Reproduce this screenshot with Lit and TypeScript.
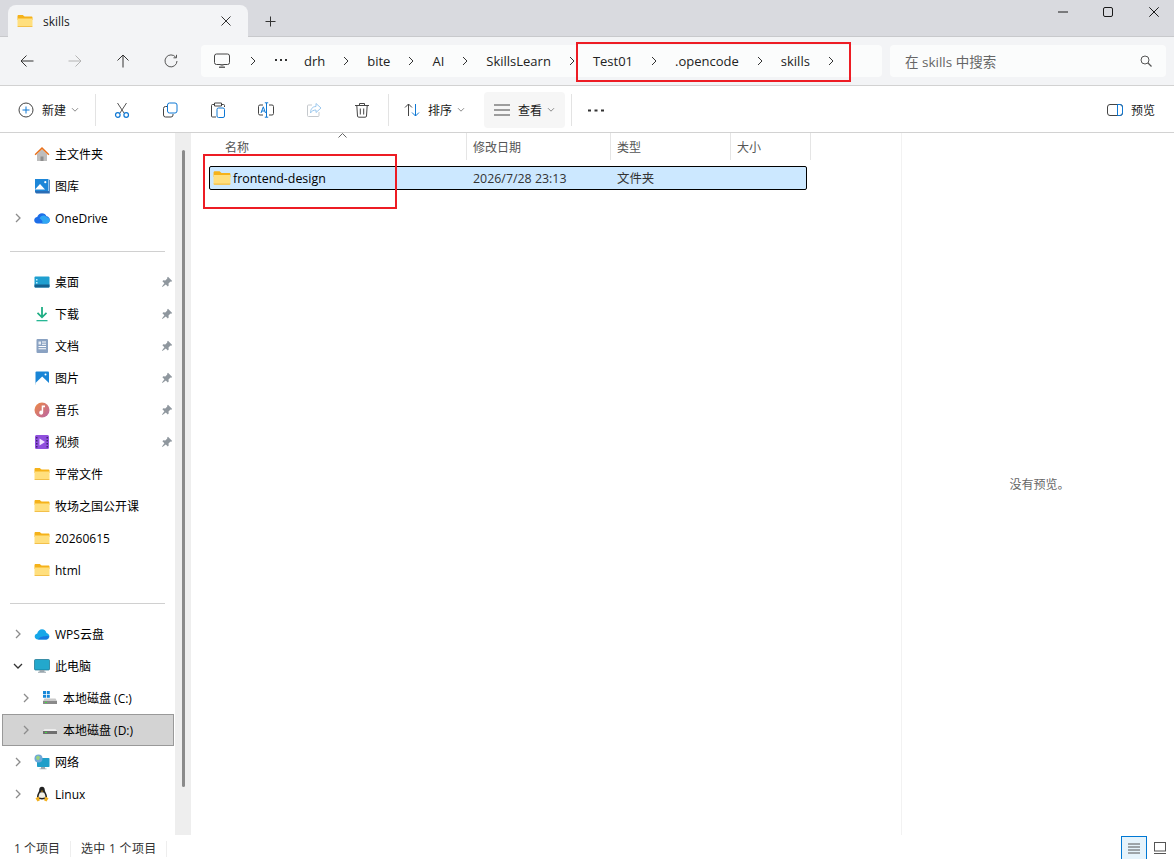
import { LitElement, css, html, svg } from "lit";
import { customElement } from "lit/decorators.js";

const folderIcon = (size = 16) => html`<svg width=${size} height=${size} viewBox="0 0 16 16">
  <path d="M0.5 3.2c0-.7.5-1.2 1.2-1.2h3.6c.4 0 .7.1 1 .4L7.6 3.5h6.8c.7 0 1.1.5 1.1 1.1V7H.5z" fill="#f5b21a" />
  <path d="M.5 5.4h15v7.5c0 .7-.5 1.2-1.2 1.2H1.7c-.7 0-1.2-.5-1.2-1.2z" fill="#ffdf7e" />
  <path d="M.5 12.9v.1c0 .6.5 1.1 1.2 1.1h12.6c.7 0 1.2-.5 1.2-1.1v-.1z" fill="#f3c04a" />
</svg>`;

const pinIcon = html`<svg width="12" height="12" viewBox="0 0 12 12">
  <path d="M7 .8l4.2 4.2-1 .8-.7-.2-2 2 .2 2-.9.9-2-2L1.4 11 1 10.6l2.4-3.4-2-2 .9-.9 2 .2 2-2-.2-.7z" fill="#8f979e" />
</svg>`;

const navIcons: Record<string, unknown> = {
  home: svg`<path d="M3 8v7h10V8L8 3.5z" fill="#bdbdbd" /><path d="M6.5 15v-4.5h3V15z" fill="#8e8e8e" /><path d="M.6 8.2L8 1l7.4 7.2-1 1.1L8 3.3 1.6 9.3z" fill="#e8701a" />`,
  gallery: svg`<path d="M1 1h13.5v12.8H1z" fill="#1c86d8" /><path d="M1 11.5l5-5.5 5 5.5z" fill="#fff" /><circle cx="11.3" cy="4.2" r="1.1" fill="#fff" /><path d="M1 13h14V1.8h.8V15.4H2.5c-1 0-1.5-1-1.5-2.4z" fill="#2a6db5" />`,
  cloud: svg`<path d="M3.7 13.5C1.6 13.5.2 12 .2 10.2c0-1.8 1.3-3.1 3-3.3C4 4.600 5.800 3.200 8 3.200c2.100 0 3.800 1.200 4.500 3.100 1.900.100 3.300 1.700 3.300 3.600 0 2-1.500 3.600-3.500 3.600z" fill="#1d6ee8" /><path d="M5.500 8.500c1-2.600 3.500-3.800 5.800-2.600 1 .5 1.500 1 1.700 1.400 1.700.4 2.800 1.600 2.800 2.800 0 2-1.500 3.400-3.500 3.400H7.500c2 -1 1-3.500-2-5z" fill="#2fa6f2" />`,
  desktop: svg`<rect x="0.500" y="2.500" width="15" height="11" rx="1" fill="#1f9fd0" /><path d="M.5 10.500h15v2c0 .6-.4 1-1 1h-13c-.6 0-1-.4-1-1z" fill="#14608f" /><path d="M2 5h1.500v1.500H2zM2 8h1.500v1.500H2z" fill="#bff0ff" />`,
  download: svg`<path d="M7.100 1h1.800v8.300l3-3 1.200 1.200L8 12.600 2.900 7.500l1.200-1.200 3 3z" fill="#1fae84" /><path d="M2.500 14h11v1.300h-11z" fill="#27b795" />`,
  doc: svg`<rect x="2.500" y="1" width="11.500" height="14" rx="1" fill="#8aa2c2" /><path d="M8 3.500h4v1H8zM8 5.800h4v1H8zM4.500 8h7.500v1H4.500zM4.500 10.300h7.500v1H4.500z" fill="#fff" /><path d="M4.500 3.500h2.500v3H4.500z" fill="#e7edf5" />`,
  picture: svg`<rect x="1.500" y="1.500" width="13.500" height="13.500" rx="1" fill="#1a85d6" /><path d="M1.500 13L8.200 6.500 15 13v2H1.500z" fill="#fff" /><circle cx="11.500" cy="4.500" r="1" fill="#fff" />`,
  music: svg`<defs><linearGradient id="mg" x1="0" y1="0" x2="1" y2="1"><stop offset="0" stop-color="#ef8a42" /><stop offset="1" stop-color="#b964a8" /></linearGradient></defs><circle cx="8" cy="8" r="7.500" fill="url(#mg)" /><path d="M7.700 3.500h3.300v1.800H9.200v5.300a2 2 0 1 1-1.500-1.900z" fill="#fff" />`,
  video: svg`<rect x="1" y="1" width="14" height="14" rx="1.500" fill="#8f4fdd" /><path d="M2 3h1.500v1.500H2zM2 6h1.500v1.500H2zM2 9h1.500v1.500H2zM2 12h1.500v1.500H2zM12.500 3H14v1.500h-1.500zM12.500 6H14v1.500h-1.500zM12.500 9H14v1.500h-1.500zM12.500 12H14v1.500h-1.500z" fill="#3f2470" /><path d="M5.500 4.500L11 8l-5.500 3.500z" fill="#f1e6ff" />`,
  wps: svg`<path d="M4 13.500c-2 0-3.300-1.400-3.300-3 0-1.500 1-2.700 2.500-3C3.900 5 5.800 3.300 8 3.300c2.200 0 4 1.500 4.500 3.700 1.700.3 2.900 1.700 2.900 3.300 0 1.800-1.400 3.200-3.200 3.200z" fill="#16a7e8" /><path d="M4 13.500c2-3 5-3.500 11-3.500 0 2-1.300 3.500-3 3.500z" fill="#1679e0" />`,
  pc: svg`<rect x=".5" y="1.500" width="15" height="10.500" rx="1" fill="#23a8cc" stroke="#16708d" stroke-width=".7" /><path d="M5.500 12h5v1.800h-5zM4 13.800h8v1H4z" fill="#9aa7ae" />`,
  diskC: svg`<path d="M1 1h3v3H1zM4.800 1h3v3h-3zM1 4.800h3v3H1zM4.800 4.800h3v3h-3z" fill="#1788d8" /><path d="M1 11l1.500-2.500h11L15 11z" fill="#c9c9c9" /><rect x="1" y="11" width="14" height="3" fill="#8a8a8a" /><rect x="3" y="12" width="2" height="1" fill="#40e040" />`,
  diskD: svg`<path d="M1 9l1.500-2h11L15 9z" fill="#ececec" /><rect x="1" y="9" width="14" height="3" fill="#6f6f6f" /><rect x="3" y="10" width="2" height="1" fill="#40e040" />`,
  network: svg`<rect x="3" y="4" width="12.500" height="9" rx=".8" fill="#1f9ec9" /><path d="M7 13h4v1.500H7zM5.500 14.500h7v.8h-7z" fill="#9aa7ae" /><circle cx="4.500" cy="4.500" r="4" fill="#6fa8d8" /><path d="M2 3l2-1.500L6 3 5 6 2.500 5.500z" fill="#9ad27c" />`,
  linux: svg`<path d="M8 .8c-2 0-2.800 1.600-2.800 3.400 0 1.500-2.200 3.600-2.200 6.300 0 1.500 1 2.900 5 2.900s5-1.400 5-2.900c0-2.700-2.200-4.800-2.200-6.300C10.800 2.400 10 .8 8 .8z" fill="#222" /><path d="M6 6.800c.7-.7 3.300-.7 4 0 1 1.400 1.500 2.900 1.300 4.300-1 1.200-5.600 1.200-6.600 0-.2-1.400.3-2.900 1.300-4.300z" fill="#f4f0e4" /><path d="M6.800 4.800h2.400L8 6z" fill="#f2b01e" /><path d="M1.500 12.200L4.600 10.500l1.400 3.700-2.500 1.300zM14.500 12.200l-3.100-1.700-1.400 3.700 2.500 1.300z" fill="#f2b01e" />`,
};

type NavRow = {
  label: string;
  icon: string;
  arrow?: "right" | "down";
  pinned?: boolean;
  child?: boolean;
  selected?: boolean;
  folder?: boolean;
};

const quick: NavRow[] = [
  { label: "主文件夹", icon: "home" },
  { label: "图库", icon: "gallery" },
  { label: "OneDrive", icon: "cloud", arrow: "right" },
];
const pinnedRows: NavRow[] = [
  { label: "桌面", icon: "desktop", pinned: true },
  { label: "下载", icon: "download", pinned: true },
  { label: "文档", icon: "doc", pinned: true },
  { label: "图片", icon: "picture", pinned: true },
  { label: "音乐", icon: "music", pinned: true },
  { label: "视频", icon: "video", pinned: true },
  { label: "平常文件", icon: "", folder: true },
  { label: "牧场之国公开课", icon: "", folder: true },
  { label: "20260615", icon: "", folder: true },
  { label: "html", icon: "", folder: true },
];
const drives: NavRow[] = [
  { label: "WPS云盘", icon: "wps", arrow: "right" },
  { label: "此电脑", icon: "pc", arrow: "down" },
  { label: "本地磁盘 (C:)", icon: "diskC", arrow: "right", child: true },
  { label: "本地磁盘 (D:)", icon: "diskD", arrow: "right", child: true, selected: true },
  { label: "网络", icon: "network", arrow: "right" },
  { label: "Linux", icon: "linux", arrow: "right" },
];

const crumbs = ["drh", "bite", "AI", "SkillsLearn", "Test01", ".opencode", "skills"];

const chevron = html`<svg class="crumb-chev" width="8" height="10" viewBox="0 0 8 10"><path d="M2 1l4 4-4 4" fill="none" stroke="#333" stroke-width="1" /></svg>`;
const miniChevron = html`<svg class="mini" width="8" height="6" viewBox="0 0 8 6"><path d="M1 1.200l3 3 3-3" fill="none" stroke="#8a8a8a" stroke-width="1" /></svg>`;

@customElement("app-root")
export class AppRoot extends LitElement {
  private navRow(r: NavRow) {
    return html`<div class="nav-row ${r.child ? "child" : ""} ${r.selected ? "selected" : ""}">
      <span class="arrow">
        ${r.arrow === "right"
          ? html`<svg width="8" height="10" viewBox="0 0 8 10"><path d="M2 1l4 4-4 4" fill="none" stroke="#8c8c8c" stroke-width="1.300" /></svg>`
          : r.arrow === "down"
            ? html`<svg width="10" height="8" viewBox="0 0 10 8"><path d="M1 2l4 4 4-4" fill="none" stroke="#333" stroke-width="1.300" /></svg>`
            : ""}
      </span>
      <span class="nav-icon">
        ${r.folder ? folderIcon() : html`<svg width="16" height="16" viewBox="0 0 16 16">${navIcons[r.icon]}</svg>`}
      </span>
      <span class="nav-label">${r.label}</span>
      ${r.pinned ? html`<span class="pin">${pinIcon}</span>` : ""}
    </div>`;
  }

  render() {
    return html`
      <div class="titlebar">
        <div class="tab">
          ${folderIcon()}
          <span class="tab-title">skills</span>
          <svg class="tab-close" width="10" height="10" viewBox="0 0 10 10"><path d="M.5.5l9 9M9.500.5l-9 9" stroke="#333" stroke-width="1" /></svg>
        </div>
        <svg class="tab-add" width="11" height="11" viewBox="0 0 11 11"><path d="M5.500.5v10M.5 5.500h10" stroke="#333" stroke-width="1" /></svg>
        <div class="win-controls">
          <svg width="10" height="10" viewBox="0 0 10 10"><path d="M0 5h10" stroke="#1a1a1a" stroke-width="1" /></svg>
          <svg width="10" height="10" viewBox="0 0 10 10"><rect x=".5" y=".5" width="9" height="9" rx="1.500" fill="none" stroke="#1a1a1a" stroke-width="1" /></svg>
          <svg width="10" height="10" viewBox="0 0 10 10"><path d="M.3.3l9.400 9.400M9.700.3L.3 9.700" stroke="#1a1a1a" stroke-width="1" /></svg>
        </div>
      </div>

      <div class="addressrow">
        <div class="nav-buttons">
          <svg width="14" height="14" viewBox="0 0 14 14"><path d="M13.500 7H1M6.500 1.500L1 7l5.500 5.500" fill="none" stroke="#333" stroke-width="1" /></svg>
          <svg width="14" height="14" viewBox="0 0 14 14"><path d="M.5 7H13M7.500 1.500L13 7l-5.500 5.500" fill="none" stroke="#b4b4b4" stroke-width="1" /></svg>
          <svg width="14" height="14" viewBox="0 0 14 14"><path d="M7 13.500V1M1.500 6.500L7 1l5.500 5.500" fill="none" stroke="#333" stroke-width="1" /></svg>
          <svg width="14" height="14" viewBox="0 0 14 14"><path d="M11.800 3.300A6 6 0 1 0 13 7M12.500.8v3h-3" fill="none" stroke="#555" stroke-width="1" /></svg>
        </div>
        <div class="crumbs">
          <svg class="monitor" width="16" height="16" viewBox="0 0 16 16"><rect x=".5" y="1" width="15" height="10.500" rx="2" fill="none" stroke="#444" stroke-width="1" /><path d="M5 13.500h6v1.500H5z" fill="#666" /><path d="M6.500 11.500h3v2h-3z" fill="#999" /></svg>
          ${chevron}
          <svg class="crumb-dots" width="12" height="3" viewBox="0 0 12 3"><path d="M0 0h2v2H0zM5 0h2v2H5zM10 0h2v2h-2z" fill="#333" /></svg>
          ${crumbs.map((c) => html`<span class="crumb">${c}</span>${chevron}`)}
        </div>
        <div class="search">
          <span>在 skills 中搜索</span>
          <svg width="12" height="12" viewBox="0 0 12 12"><circle cx="5" cy="5" r="4" fill="none" stroke="#555" stroke-width="1" /><path d="M8 8l3.500 3.500" stroke="#555" stroke-width="1.200" /></svg>
        </div>
      </div>

      <div class="toolbar">
        <div class="tool-new">
          <svg width="16" height="16" viewBox="0 0 16 16"><circle cx="8" cy="8" r="7" fill="none" stroke="#444" stroke-width="1" /><path d="M8 4.500v7M4.500 8h7" stroke="#0f78d4" stroke-width="1" /></svg>
          <span>新建</span>
          ${miniChevron}
        </div>
        <i class="tool-sep"></i>
        <div class="tool-icons">
          <svg width="16" height="16" viewBox="0 0 16 16"><path d="M3.500 1L10 11M12.500 1L6 11" fill="none" stroke="#555" stroke-width="1" /><circle cx="3.800" cy="13" r="2.300" fill="none" stroke="#0f78d4" stroke-width="1.200" /><circle cx="12.200" cy="13" r="2.300" fill="none" stroke="#0f78d4" stroke-width="1.200" /></svg>
          <svg width="16" height="16" viewBox="0 0 16 16"><rect x="5.500" y="1" width="9.500" height="10" rx="2" fill="none" stroke="#0f78d4" stroke-width="1" /><path d="M5 4.500H3.500a2 2 0 0 0-2 2V13a2 2 0 0 0 2 2H9a2 2 0 0 0 2-2v-1" fill="none" stroke="#444" stroke-width="1" /></svg>
          <svg width="16" height="16" viewBox="0 0 16 16"><path d="M4 2.500H2.500a1 1 0 0 0-1 1V14a1 1 0 0 0 1 1H6M12 2.500h1.500a1 1 0 0 1 1 1V5M4.500 1h7v3h-7z" fill="none" stroke="#444" stroke-width="1" /><rect x="7" y="6" width="7.500" height="9.500" rx="1.500" fill="none" stroke="#0f78d4" stroke-width="1" /></svg>
          <svg width="16" height="16" viewBox="0 0 16 16"><path d="M5 3H2a1.500 1.500 0 0 0-1.500 1.500v7A1.500 1.500 0 0 0 2 13h3M11 3h3a1.500 1.500 0 0 1 1.500 1.500v7A1.500 1.500 0 0 1 14 13h-3" fill="none" stroke="#444" stroke-width="1" /><path d="M8.500 1v14M6.800.8h3.400M6.800 15.200h3.400M3 11l2.300-6.200L7.500 11M3.800 9h3" fill="none" stroke="#0f78d4" stroke-width="1" /></svg>
          <svg width="16" height="16" viewBox="0 0 16 16"><path d="M6 3H2.500a1 1 0 0 0-1 1v9.500a1 1 0 0 0 1 1H12a1 1 0 0 0 1-1V10" fill="none" stroke="#c5c9cd" stroke-width="1" /><path d="M10 1.500L15 6l-5 4.500V8C7.500 8 5.500 9 4.500 11c0-4 2-6.500 5.500-6.500z" fill="none" stroke="#9cc8ee" stroke-width="1" /></svg>
          <svg width="16" height="16" viewBox="0 0 16 16"><path d="M1 3.500h14M5.500 3.500V1.500h5v2M2.800 3.500l.7 10.500a1.300 1.300 0 0 0 1.300 1.200h6.400a1.300 1.300 0 0 0 1.300-1.200l.7-10.500M6.300 6.500v6M9.700 6.500v6" fill="none" stroke="#444" stroke-width="1" /></svg>
        </div>
        <i class="tool-sep second"></i>
        <div class="tool-sort">
          <svg width="16" height="16" viewBox="0 0 16 16"><path d="M4.500 14V2M1 5.500L4.500 2 8 5.500" fill="none" stroke="#444" stroke-width="1" /><path d="M11.500 2v12M8 10.500l3.500 3.500 3.500-3.500" fill="none" stroke="#0f78d4" stroke-width="1" /></svg>
          <span>排序</span>
          ${miniChevron}
        </div>
        <div class="tool-view">
          <svg width="16" height="16" viewBox="0 0 16 16"><path d="M0 3h16M0 8h16M0 13h16" stroke="#444" stroke-width="1" /></svg>
          <span>查看</span>
          ${miniChevron}
        </div>
        <i class="tool-sep third"></i>
        <svg class="tool-more" width="16" height="3" viewBox="0 0 16 3"><path d="M0 .5h3v2H0zM6.500 .5h3v2h-3zM13 .5h3v2h-3z" fill="#333" /></svg>
        <div class="tool-preview">
          <svg width="16" height="14" viewBox="0 0 16 14"><rect x=".5" y="1.500" width="15" height="11" rx="2.500" fill="none" stroke="#444" stroke-width="1" /><path d="M10.500 1.500v11M10.500 1.500H13a2.500 2.500 0 0 1 2.500 2.500v6a2.500 2.500 0 0 1-2.500 2.500h-2.500" fill="none" stroke="#0f78d4" stroke-width="1" /></svg>
          <span>预览</span>
        </div>
      </div>

      <div class="body">
        <nav class="sidebar">
          <div class="nav-group">${quick.map((r) => this.navRow(r))}</div>
          <hr />
          <div class="nav-group">${pinnedRows.map((r) => this.navRow(r))}</div>
          <hr />
          <div class="nav-group">${drives.map((r) => this.navRow(r))}</div>
        </nav>
        <div class="track"><div class="thumb"></div></div>

        <section class="files">
          <div class="columns">
            <svg class="sort-caret" width="9" height="5" viewBox="0 0 9 5"><path d="M.5 4.500l4-4 4 4" fill="none" stroke="#666" stroke-width="1" /></svg>
            <span>名称</span><span>修改日期</span><span>类型</span><span>大小</span>
          </div>
          <div class="file-row">
            <span class="file-name">${folderIcon(18)}<b>frontend-design</b></span>
            <span>2026/7/28 23:13</span>
            <span>文件夹</span>
          </div>
        </section>

        <aside class="preview"><span>没有预览。</span></aside>
      </div>

      <footer class="status">
        <span class="count">1 个项目</span>
        <span class="count selected-count">选中 1 个项目</span>
        <div class="view-toggle">
          <span class="toggle active">
            <svg width="12" height="11" viewBox="0 0 12 11"><path d="M0 1h12M0 4h12M0 7h12M0 10h12" stroke="#555" stroke-width="1" /></svg>
          </span>
          <span class="toggle">
            <svg width="12" height="12" viewBox="0 0 12 12"><rect x=".5" y=".5" width="11" height="8.500" fill="none" stroke="#555" stroke-width="1" /><path d="M0 11.500h12" stroke="#555" stroke-width="1" /></svg>
          </span>
        </div>
      </footer>

      <div class="callout path-callout"></div>
      <div class="callout row-callout"></div>
    `;
  }

  static styles = css`
    :host {
      display: flex;
      flex-direction: column;
      position: relative;
      width: 100%;
      height: 100vh;
      overflow: hidden;
      background: #fff;
      color: #1a1a1a;
      font-family: "Open Sans", "Noto Sans CJK SC", sans-serif;
      font-size: 12px;
    }

    svg {
      flex: none;
      display: block;
    }

    .titlebar {
      flex: none;
      height: 37px;
      box-sizing: border-box;
      display: flex;
      align-items: flex-end;
      background: #d9dadf;
      border-bottom: 1px solid #c8c9cc;
      padding-left: 8px;
    }
    .tab {
      width: 240px;
      height: 32px;
      box-sizing: border-box;
      margin-bottom: -1px;
      padding: 0 17px 0 9px;
      display: flex;
      align-items: center;
      background: #f3f4f6;
      border-radius: 8px 8px 0 0;
    }
    .tab-title {
      margin-left: 10px;
      flex: 1;
    }
    .tab-add {
      margin: 0 0 9px 17px;
    }
    .win-controls {
      margin-left: auto;
      align-self: flex-start;
      padding: 7px 15px 0 0;
      display: flex;
      gap: 35px;
    }
    .win-controls svg:last-child {
      margin-left: 1px;
    }

    .addressrow {
      flex: none;
      height: 49px;
      box-sizing: border-box;
      display: flex;
      align-items: center;
      background: #f3f4f6;
      border-bottom: 1px solid #d2d2d2;
      padding-bottom: 1px;
    }
    .nav-buttons {
      width: 201px;
      padding-left: 20px;
      box-sizing: border-box;
      display: flex;
      gap: 34px;
    }
    .crumbs {
      width: 681px;
      height: 32px;
      box-sizing: border-box;
      padding-left: 13px;
      display: flex;
      align-items: center;
      gap: 17px;
      background: #fbfcfc;
      border-radius: 4px;
      font-size: 13px;
      color: #222;
    }
    .monitor {
      margin-right: 2px;
    }
    .crumb-dots {
      margin-left: 1px;
    }
    .search {
      width: 276px;
      height: 32px;
      box-sizing: border-box;
      margin-left: 8px;
      padding: 0 14px 0 15px;
      display: flex;
      align-items: center;
      justify-content: space-between;
      background: #fbfcfc;
      border-radius: 4px;
      font-size: 13.5px;
      color: #666;
    }

    .toolbar {
      flex: none;
      height: 47px;
      box-sizing: border-box;
      display: flex;
      align-items: center;
      padding: 2px 19px 0 18px;
      border-bottom: 1px solid #d2d2d2;
    }
    .tool-new,
    .tool-sort,
    .tool-view,
    .tool-preview {
      display: flex;
      align-items: center;
    }
    .tool-new span,
    .tool-sort span,
    .tool-view span,
    .tool-preview span {
      margin-left: 8px;
    }
    .mini {
      margin-left: 5px;
    }
    .tool-sep {
      width: 1px;
      height: 32px;
      background: #e3e3e3;
      margin-left: 16px;
    }
    .tool-sep.second {
      margin-left: 18px;
    }
    .tool-sep.third {
      margin-left: 6px;
    }
    .tool-icons {
      display: flex;
      gap: 32px;
      margin-left: 18px;
    }
    .tool-sort {
      margin-left: 15px;
    }
    .tool-view {
      height: 36px;
      box-sizing: border-box;
      width: 81px;
      margin-left: 19px;
      padding-left: 10px;
      background: #f6f6f6;
      border-radius: 4px;
    }
    .tool-more {
      margin-left: 16px;
    }
    .tool-preview {
      margin-left: auto;
    }

    .body {
      flex: 1;
      min-height: 0;
      display: flex;
    }
    .sidebar {
      flex: none;
      width: 175px;
      padding-top: 5px;
      box-sizing: border-box;
    }
    .sidebar hr {
      margin: 17px 10px 14px;
      border: 0;
      border-top: 1px solid #d0d0d0;
    }
    .nav-group {
      display: flex;
      flex-direction: column;
    }
    .nav-row {
      height: 32px;
      box-sizing: border-box;
      display: flex;
      align-items: center;
      margin: 0 1px 0 2px;
      padding: 0 0 0 10px;
      border: 1px solid transparent;
      color: #000;
    }
    .nav-row.child {
      padding-left: 18px;
    }
    .nav-row.selected {
      background: #d3d3d3;
      border-color: #999;
    }
    .arrow {
      width: 10px;
      display: flex;
      justify-content: center;
    }
    .nav-icon {
      margin-left: 11px;
    }
    .nav-label {
      margin-left: 5px;
      white-space: nowrap;
    }
    .pin {
      margin-left: auto;
    }

    .track {
      flex: none;
      width: 16px;
      background: #eeeeee;
      position: relative;
    }
    .thumb {
      position: absolute;
      left: 7px;
      top: 17px;
      width: 3px;
      height: 637px;
      border-radius: 2px;
      background: #8a8a8a;
    }

    .files {
      flex: none;
      width: 710px;
      padding-left: 2px;
      box-sizing: border-box;
    }
    .columns {
      position: relative;
      display: grid;
      grid-template-columns: 274px 144px 120px 80px;
      height: 27px;
      color: #555;
    }
    .columns span {
      display: flex;
      align-items: center;
      padding-left: 6px;
      border-right: 1px solid #e5e5e5;
      white-space: nowrap;
    }
    .columns span:first-of-type {
      padding-left: 32px;
    }
    .sort-caret {
      position: absolute;
      left: 145px;
      top: 0;
    }
    .file-row {
      display: grid;
      grid-template-columns: 263px 144px 1fr;
      width: 598px;
      height: 24px;
      box-sizing: border-box;
      margin: 6px 0 0 16px;
      align-items: center;
      background: #cce8ff;
      border: 1px solid #000;
      border-radius: 2px;
      color: #333;
      font-size: 12.4px;
    }
    .file-name {
      display: flex;
      align-items: center;
      gap: 2px;
      padding-left: 3px;
    }
    .file-name b {
      font-weight: 400;
      color: #000;
    }

    .preview {
      flex: 1;
      display: flex;
      align-items: center;
      justify-content: center;
      border-left: 1px solid #f2f2f2;
      color: #666;
      padding-left: 3px;
    }

    .status {
      flex: none;
      height: 24px;
      box-sizing: border-box;
      padding: 3px 0 0 14px;
      display: flex;
      align-items: center;
      color: #333;
    }
    .count {
      padding-right: 10px;
      border-right: 1px solid #eee;
      line-height: 16px;
      margin-right: 10px;
    }
    .selected-count {
      letter-spacing: 0.3px;
    }
    .view-toggle {
      margin-left: auto;
      align-self: flex-end;
      display: flex;
      padding-right: 1px;
    }
    .toggle {
      width: 26px;
      height: 23px;
      box-sizing: border-box;
      display: flex;
      align-items: center;
      justify-content: center;
    }
    .toggle.active {
      background: #e5f3fb;
      border: 1px solid #0078d4;
      border-bottom: 0;
    }

    .callout {
      position: absolute;
      box-sizing: border-box;
      border: 2px solid #ed1c24;
      pointer-events: none;
    }
    .path-callout {
      left: 576px;
      top: 42px;
      width: 275px;
      height: 40px;
    }
    .row-callout {
      left: 203px;
      top: 154px;
      width: 194px;
      height: 55px;
    }
  `;
}

declare global {
  interface HTMLElementTagNameMap {
    "app-root": AppRoot;
  }
}
